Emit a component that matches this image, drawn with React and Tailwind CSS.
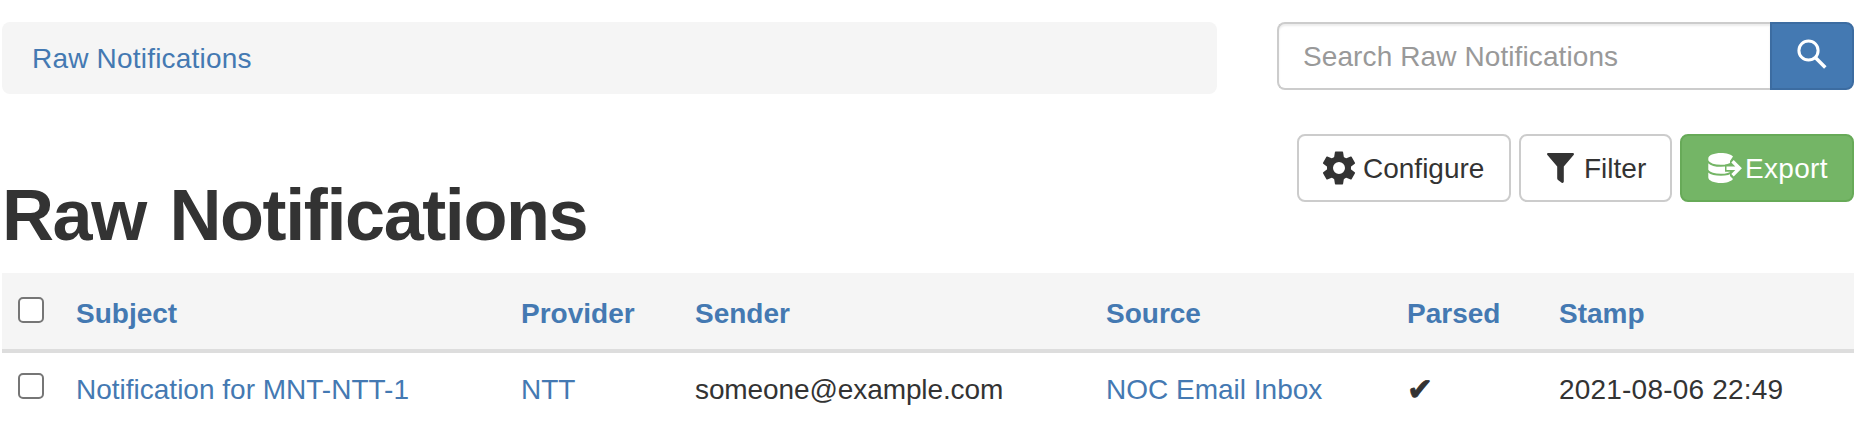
function Checkbox() {
  return (
    <input
      type="checkbox"
      className="block size-[26px] appearance-none rounded-[5px] border-2 border-[#767676] bg-white"
    />
  );
}

function SearchIcon() {
  return (
    <svg className="mb-1 mr-px h-[30px] w-[30px]" viewBox="0 0 30 30" fill="none" stroke="currentColor">
      <circle cx="11.500" cy="11.500" r="9.600" strokeWidth="3" />
      <path d="M18.800 19L28.300 28.500" strokeWidth="3.500" />
    </svg>
  );
}

function GearIcon() {
  return (
    <svg className="h-[34px] w-[34px]" viewBox="-17 -17 34 34" fill="currentColor">
      <circle r="9" fill="none" stroke="currentColor" strokeWidth="6" />
      {[0, 60, 120, 180, 240, 300].map((angle) => (
        <path
          key={angle}
          transform={`rotate(${angle})`}
          d="M-3.400 -16.500H3.400Q4 -16.500 4.100 -15.800L5 -10H-5L-4.100 -15.800Q-4 -16.500 -3.400 -16.500Z"
        />
      ))}
    </svg>
  );
}

function FilterIcon() {
  return (
    <svg className="h-[30px] w-[27px]" viewBox="0 0 27 30" fill="currentColor">
      <path d="M1.200 0H25.800C26.800 0 27.300 1.200 26.600 2L16.800 13.500V28.600C16.800 29.700 15.600 30.300 14.700 29.700L11 27C10.500 26.500 10.200 25.900 10.200 25.200V13.500L.4 2C-.3 1.200.2 0 1.200 0Z" />
    </svg>
  );
}

function DatabaseExportIcon() {
  return (
    <svg className="h-[30px] w-[34px]" viewBox="0 0 34 30" fill="none">
      <path
        d="M.3 5.500C.3 2.300 6 0 13 0C18.500 0 23 1.300 25 3.500L22 8V23L25 26C23 28.500 18.500 30 13 30C6 30 .3 27.500.3 24.500Z"
        fill="currentColor"
      />
      <g stroke="#74b566" strokeWidth="2">
        <path d="M-1 7.500C1.500 11.500 7 12.800 13 12.800C18 12.800 22 11.700 25 9.500" />
        <path d="M-1 17C1.500 20.500 7 21.800 13 21.800C18 21.800 22 20.800 25 18.500" />
      </g>
      <path d="M17 15.200H31M24.500 8L31.500 15.200L24.500 22.400" stroke="#74b566" strokeWidth="7" />
      <path d="M18.500 15.200H31M24.500 8.200L31.500 15.200L24.500 22.200" stroke="currentColor" strokeWidth="3.400" />
    </svg>
  );
}

const headings = ["Subject", "Provider", "Sender", "Source", "Parsed", "Stamp"];

export default function App() {
  return (
    <div className="h-[432px] w-full overflow-hidden bg-white pl-0.5 pr-[22px] pt-[22px] font-['Liberation_Sans',Arial,sans-serif] text-[28px] leading-[40px] text-[#333]">
      <div className="flex items-start justify-between">
        <nav className="h-[72px] w-[1215px] rounded-lg bg-[#f5f5f5] px-[30px] pt-[17px]">
          <a className="tracking-[0.2px] text-[#4479b2]">Raw Notifications</a>
        </nav>
        <div className="flex h-[68px] w-[577px]">
          <input
            placeholder="Search Raw Notifications"
            className="min-w-0 flex-1 rounded-l-lg border-2 border-r-0 border-[#ccc] px-6 pt-0.5 tracking-[0.1px] shadow-[inset_0_2px_2px_rgba(0,0,0,0.075)] placeholder:text-[#999]"
          />
          <button className="flex w-[84px] items-center justify-center rounded-r-lg border-2 border-[#3c6ca1] bg-[#4479b2] text-white">
            <SearchIcon />
          </button>
        </div>
      </div>

      <div className="mt-10 flex h-[139px] justify-between">
        <h1 className="pt-[41px] text-[72px] font-bold leading-[80px] tracking-[-1.4px] [word-spacing:5px]">Raw Notifications</h1>
        <div className="flex h-[68px] gap-2">
          <button className="flex w-[214px] items-center rounded-lg border-2 border-[#ccc] pl-[23px]">
            <GearIcon />
            <span className="ml-[7px] pt-0.5">Configure</span>
          </button>
          <button className="flex w-[153px] items-center rounded-lg border-2 border-[#ccc] pl-[26px]">
            <FilterIcon />
            <span className="ml-[10px] pt-0.5">Filter</span>
          </button>
          <button className="flex w-[174px] items-center rounded-lg border-2 border-[#67aa58] bg-[#74b566] pl-[26px] text-white">
            <DatabaseExportIcon />
            <span className="ml-[3px] pt-0.5 tracking-[0.3px]">Export</span>
          </button>
        </div>
      </div>

      <table className="w-[1852px] table-fixed border-separate border-spacing-0 text-left">
        <colgroup>
          <col className="w-[74px]" />
          <col className="w-[445px]" />
          <col className="w-[174px]" />
          <col className="w-[411px]" />
          <col className="w-[301px]" />
          <col className="w-[152px]" />
          <col />
        </colgroup>
        <thead>
          <tr className="h-[80px] bg-[#f5f5f5] text-[#4479b2]">
            <th className="border-b-4 border-[#ddd] pl-4 pt-6 align-top"><Checkbox /></th>
            {headings.map((heading) => (
              <th key={heading} className="border-b-4 border-[#ddd] p-0 pt-1.5 font-bold">{heading}</th>
            ))}
          </tr>
        </thead>
        <tbody>
          <tr className="h-[72px]">
            <td className="pl-4 pt-5 align-top"><Checkbox /></td>
            <td className="pt-0.5 text-[#4479b2]">Notification for MNT-NTT-1</td>
            <td className="pt-0.5 text-[#4479b2]">NTT</td>
            <td className="pt-0.5 tracking-[-0.1px]">someone@example.com</td>
            <td className="pt-0.5 text-[#4479b2]">NOC Email Inbox</td>
            <td className="pt-0.5"><span className="text-[31px] [-webkit-text-stroke:0.8px_#333]">✔</span></td>
            <td className="pt-0.5 tracking-[0.2px]">2021-08-06 22:49</td>
          </tr>
        </tbody>
      </table>
    </div>
  );
}
